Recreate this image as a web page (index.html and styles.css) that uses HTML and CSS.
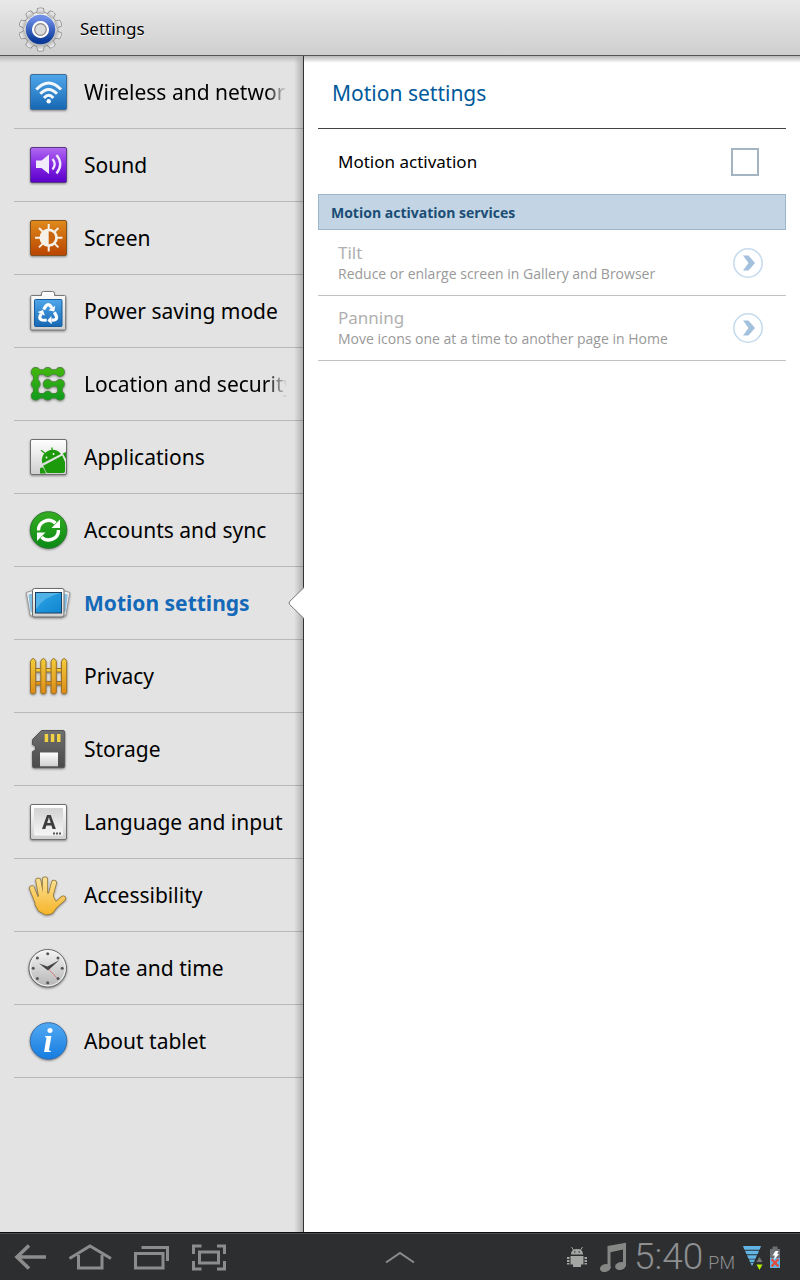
FILE: index.html
```html
<!DOCTYPE html>
<html lang="en">
<head>
<meta charset="utf-8">
<meta name="viewport" content="width=device-width, initial-scale=1">
<title>Settings</title>
<link rel="stylesheet" href="styles.css">
</head>
<body>
<svg class="defs" width="0" height="0" aria-hidden="true">
  <defs>
    <linearGradient id="blue" x2="0" y2="1"><stop stop-color="#4fa6ea"/><stop offset="1" stop-color="#1768b4"/></linearGradient>
    <linearGradient id="purple" x2="0" y2="1"><stop stop-color="#b06af0"/><stop offset=".5" stop-color="#8428e4"/><stop offset="1" stop-color="#5a00c8"/></linearGradient>
    <linearGradient id="orange" x2="0" y2="1"><stop stop-color="#e08a1c"/><stop offset="1" stop-color="#b94400"/></linearGradient>
    <linearGradient id="silver" x2="0" y2="1"><stop stop-color="#ffffff"/><stop offset="1" stop-color="#cfcfcf"/></linearGradient>
    <linearGradient id="pane" x2="0" y2="1"><stop stop-color="#d2d2d2"/><stop offset="1" stop-color="#f6f6f6"/></linearGradient>
    <linearGradient id="steel" x2="0" y2="1"><stop stop-color="#f4f4f4"/><stop offset="1" stop-color="#b4b4b4"/></linearGradient>
    <linearGradient id="green" x2="0" y2="1"><stop stop-color="#35ad22"/><stop offset="1" stop-color="#0a8a14"/></linearGradient>
    <linearGradient id="dots" gradientUnits="userSpaceOnUse" x1="0" y1="5" x2="0" y2="38"><stop stop-color="#46b80e"/><stop offset="1" stop-color="#109a1e"/></linearGradient>
    <linearGradient id="wood" x2="0" y2="1"><stop stop-color="#f3cf3c"/><stop offset="1" stop-color="#dd8a16"/></linearGradient>
    <linearGradient id="card" x2="0" y2="1"><stop stop-color="#6f6f6f"/><stop offset="1" stop-color="#4a4a4a"/></linearGradient>
    <linearGradient id="skin" gradientUnits="userSpaceOnUse" x1="0" y1="4" x2="0" y2="42"><stop stop-color="#fbe39a"/><stop offset="1" stop-color="#f5b428"/></linearGradient>
    <linearGradient id="info" x2="0" y2="1"><stop stop-color="#51a9f2"/><stop offset="1" stop-color="#167ce0"/></linearGradient>
    <linearGradient id="ring" x2="0" y2="1"><stop stop-color="#6d8de6"/><stop offset="1" stop-color="#0b3a98"/></linearGradient>
    <linearGradient id="photo" x2="1" y2="1"><stop stop-color="#2fa4e4"/><stop offset="1" stop-color="#0f86d2"/></linearGradient>
  </defs>
</svg>

<header class="topbar">
  <svg class="topbar-icon" viewBox="0 0 48 48" aria-hidden="true">
    <defs><path id="tooth" d="M20.800 9 L21.800 3.800 Q24.500 2.600 27.200 3.800 L28.200 9Z"/>
    <g id="gear"><circle cx="24.500" cy="24.500" r="17"/>
      <g id="teeth"><use href="#tooth"/><use href="#tooth" transform="rotate(36 24.500 24.500)"/><use href="#tooth" transform="rotate(72 24.500 24.500)"/><use href="#tooth" transform="rotate(108 24.500 24.500)"/><use href="#tooth" transform="rotate(144 24.500 24.500)"/></g>
      <use href="#teeth" transform="rotate(180 24.500 24.500)"/></g></defs>
    <use href="#gear" fill="#888" stroke="#888" stroke-width="1.500"/>
    <use href="#gear" fill="url(#steel)"/>
    <circle cx="24.500" cy="24.500" r="11.500" fill="none" stroke="url(#ring)" stroke-width="6.500"/>
    <circle cx="24.500" cy="24.500" r="7" fill="#dcdcdc" stroke="#fff" stroke-width="3"/>
    <circle cx="24.500" cy="24.500" r="5.800" fill="#dcdcdc" stroke="#888" stroke-width="1.200"/>
  </svg>
  <h1 class="topbar-title">Settings</h1>
</header>

<div class="content">
  <nav class="sidebar" aria-label="Settings categories">
    <ul class="menu">
      <li class="menu-row"><a class="menu-link" href="#wireless">
        <svg class="menu-icon" viewBox="0 0 44 44" aria-hidden="true"><rect x="4.500" y="4.500" width="36" height="35" rx="1.500" fill="url(#blue)" stroke="#3e6c98"/><g fill="none" stroke="#f2f7fb" stroke-width="3"><path d="M10.300 19.500Q22.700 6.500 35 19.500"/><path d="M14.300 23.800Q22.700 15 31 23.800"/><path d="M18 28Q22.700 22.500 27.300 28"/></g><circle cx="22.700" cy="31.200" r="2.200" fill="#fff"/></svg>
        <span class="menu-label menu-label-fade">Wireless and network</span></a></li>
      <li class="menu-row"><a class="menu-link" href="#sound">
        <svg class="menu-icon" viewBox="0 0 44 44" aria-hidden="true"><rect x="4.500" y="4.500" width="36" height="35" rx="1.500" fill="url(#purple)" stroke="#5a3a86"/><path d="M10 17.500h5.500L23 11.500v19.500l-7.500-6H10z" fill="#f1eafa"/><path d="M26.500 16q4.500 5.200 0 10.500M30.500 12q7.500 9 0 18.500" fill="none" stroke="#f1eafa" stroke-width="2.300"/></svg>
        <span class="menu-label">Sound</span></a></li>
      <li class="menu-row"><a class="menu-link" href="#screen">
        <svg class="menu-icon" viewBox="0 0 44 44" aria-hidden="true"><rect x="4.500" y="4.500" width="36" height="35" rx="1.500" fill="url(#orange)" stroke="#80521f"/><path d="M22.700 8v27.500M9 21.700h27.500M13 12l19.400 19.400M32.400 12L13 31.400" stroke="#f5f0e8" stroke-width="2"/><circle cx="22.700" cy="21.700" r="9.200" fill="#f5f0e8"/><path d="M22.700 15.200a6.500 6.500 0 0 1 0 13z" fill="#c9640c"/></svg>
        <span class="menu-label">Screen</span></a></li>
      <li class="menu-row"><a class="menu-link" href="#power">
        <svg class="menu-icon" viewBox="0 0 44 44" aria-hidden="true"><path d="M5.800 6.500h9.700V4.500q0-2 2-2h9q2 0 2 2v2h10q1.200 0 1.200 1.200v32q0 1.300-1.300 1.300H6q-1.300 0-1.300-1.300v-32q0-1.200 1.100-1.200z" fill="url(#silver)" stroke="#777"/><rect x="8.500" y="10.500" width="27.500" height="27" rx="1" fill="url(#blue)" stroke="#155d9f"/><g id="loop"><path d="M17.600 20.500L20 16.800Q22.200 14.500 24.400 16.800L25.800 19" fill="none" stroke="#fff" stroke-width="3.200"/><path d="M22.400 21.300L28.300 22.500 29.200 16.800z" fill="#fff"/></g><use href="#loop" transform="rotate(120 22.200 25)"/><use href="#loop" transform="rotate(240 22.200 25)"/></svg>
        <span class="menu-label">Power saving mode</span></a></li>
      <li class="menu-row"><a class="menu-link" href="#location">
        <svg class="menu-icon" viewBox="0 0 44 44" aria-hidden="true"><defs><path id="pat" d="M34 10H9.700V33.700H34V22H21.700"/><path id="pts" d="M9.700 10h0M21.700 10h0M34 10h0M9.700 22h0M21.700 22h0M34 22h0M9.700 33.700h0M21.700 33.700h0M34 33.700h0"/></defs><g fill="none" stroke-linecap="round"><g stroke="#4d8240"><use href="#pat" stroke-width="5.500"/><use href="#pts" stroke-width="9.800"/></g><g stroke="url(#dots)"><use href="#pat" stroke-width="4"/><use href="#pts" stroke-width="8.200"/></g></g></svg>
        <span class="menu-label menu-label-fade">Location and security</span></a></li>
      <li class="menu-row"><a class="menu-link" href="#applications">
        <svg class="menu-icon" viewBox="0 0 44 44" aria-hidden="true"><rect x="4.500" y="4.500" width="36" height="35" rx="1.500" fill="url(#silver)" stroke="#6f6f6f"/><g fill="#1c9a0c"><path d="M16.300 28.500q-2-8 5-12.200 8-4 13.700 2.700z"/><path d="M17.200 30.800L36.200 20.400 39 27v9q0 2-2 2H22q-1.500 0-2-1.200z"/><path d="M14 33.500q2.200-2.200 4 .4l2 4.600h-6z"/><path d="M36.800 18.500l3.200-1.500v7z"/><path d="M19.200 18.500l-4.200-3.200M26.500 16l-.8-3.500" stroke="#1c9a0c" stroke-width="1.200"/></g><g fill="#fff"><circle cx="20.500" cy="22.500" r=".9"/><circle cx="27.500" cy="19" r=".9"/></g></svg>
        <span class="menu-label">Applications</span></a></li>
      <li class="menu-row"><a class="menu-link" href="#accounts">
        <svg class="menu-icon" viewBox="0 0 44 44" aria-hidden="true"><circle cx="22.500" cy="22" r="18.300" fill="url(#green)" stroke="#2d7430"/><g id="sync-half"><path d="M12.500 22.500a10 10 0 0 1 17-7.200" fill="none" stroke="#fff" stroke-width="3.400"/><path d="M34 11.500v8.500h-8.500z" fill="#fff"/></g><use href="#sync-half" transform="rotate(180 22.500 22.200)"/></svg>
        <span class="menu-label">Accounts and sync</span></a></li>
      <li class="menu-row menu-row-current"><a class="menu-link" href="#motion" aria-current="page">
        <svg class="menu-icon" viewBox="0 0 44 44" aria-hidden="true"><g fill="#eee" stroke="#999"><path d="M.3 11.500l8-2.500v26.500l-4-1z"/><path d="M43.800 11.500l-8-2.500v26.500l4-1z"/></g><path d="M2.500 13.500l4-1v19l-2-1zM41.700 13.500l-4-1v19l2-1z" fill="#86bfdf"/><rect x="6.500" y="7.500" width="31.500" height="28.500" rx="2" fill="url(#silver)" stroke="#6c6c6c"/><rect x="9.500" y="11.500" width="26" height="20.500" fill="url(#photo)" stroke="#1d3f5e"/><path d="M10 12h25q-17 3.500-25 16z" fill="#50b2e6"/></svg>
        <span class="menu-label">Motion settings</span></a>
        <svg class="menu-pointer" viewBox="0 0 16 34" aria-hidden="true"><path d="M16 1.500L1.600 15.500q-1 1.500 0 3L16 32.500z" fill="#fff"/><path d="M16 1.500L1.600 15.500q-1 1.500 0 3L16 32.500" fill="none" stroke="#777"/></svg></li>
      <li class="menu-row"><a class="menu-link" href="#privacy">
        <svg class="menu-icon" viewBox="0 0 44 44" aria-hidden="true"><g stroke="#9a7026" fill="url(#wood)"><path d="M7 14.500h31v3.500H7zM7 27.500h31v3.500H7z"/><g id="pickets"><path id="picket" d="M4.500 7.500q0-1 2.600-3.300 2.600 2.300 2.600 3.300v31q0 1.300-2.600 1.300t-2.600-1.300z"/><use href="#picket" x="10.300"/><use href="#picket" x="20.600"/><use href="#picket" x="31"/></g></g></svg>
        <span class="menu-label">Privacy</span></a></li>
      <li class="menu-row"><a class="menu-link" href="#storage">
        <svg class="menu-icon" viewBox="0 0 44 44" aria-hidden="true"><path d="M15.500 3.500h21.500q1.700 0 1.700 1.700v34q0 1.500-1.700 1.500H8q-1.500 0-1.500-1.500V24.500l3-1.500v-4l-3-1.500v-5z" fill="url(#card)" stroke="#555"/><path d="M18.700 7h3.500v8h-3.500zM24.800 7h3.500v8h-3.500zM31 7h3.500v8H31z" fill="#f1d243"/><rect x="14" y="25.500" width="18" height="13.800" fill="url(#silver)"/></svg>
        <span class="menu-label">Storage</span></a></li>
      <li class="menu-row"><a class="menu-link" href="#language">
        <svg class="menu-icon" viewBox="0 0 44 44" aria-hidden="true"><rect x="4.500" y="4.500" width="36" height="35" rx="1.500" fill="url(#silver)" stroke="#6f6f6f"/><rect x="8" y="8" width="29" height="27.500" rx="1" fill="url(#pane)"/><text class="glyph-letter" x="23" y="29" text-anchor="middle">A</text><path d="M27 32.500h2v2h-2zM30 32.500h2v2h-2zM33 32.500h2v2h-2z" fill="#555"/></svg>
        <span class="menu-label">Language and input</span></a></li>
      <li class="menu-row"><a class="menu-link" href="#accessibility">
        <svg class="menu-icon" viewBox="0 0 44 44" aria-hidden="true"><defs><g id="hand" stroke-linecap="round" stroke-linejoin="round"><path d="M6 15.300L10.500 27M12.300 7.700L15.300 24M19 6.500V22M28 9.800L24.500 23"/><path d="M37.200 25.500L28 33.500" /><path d="M12 27L16 23.500 24 22.500 27.500 29 29.500 32 25 38.300 20 39.300 14.500 36.300 11.500 31z"/></g></defs><use href="#hand" fill="#8f7330" stroke="#8f7330" stroke-width="5.800"/><use href="#hand" fill="url(#skin)" stroke="url(#skin)" stroke-width="4.400"/></svg>
        <span class="menu-label">Accessibility</span></a></li>
      <li class="menu-row"><a class="menu-link" href="#date">
        <svg class="menu-icon" viewBox="0 0 44 44" aria-hidden="true"><circle cx="21.700" cy="22.300" r="18.800" fill="url(#steel)" stroke="#666"/><circle cx="21.700" cy="22.300" r="17.500" fill="none" stroke="#f5f5f5"/><g id="marks" fill="#555"><circle cx="21.700" cy="7.800" r="1.500"/><circle cx="32" cy="12" r="1.500"/><circle cx="36.200" cy="22.300" r="1.500"/><circle cx="32" cy="32.600" r="1.500"/></g><use href="#marks" transform="rotate(180 21.700 22.300)"/><path d="M21 21.500l9.500 10" stroke="#d57a7a"/><path d="M13 17.500l8.500 3L33.500 14 22 24.500z" fill="#444"/></svg>
        <span class="menu-label">Date and time</span></a></li>
      <li class="menu-row"><a class="menu-link" href="#about">
        <svg class="menu-icon" viewBox="0 0 44 44" aria-hidden="true"><circle cx="22.500" cy="22" r="18.300" fill="url(#info)" stroke="#3b6ea8"/><text class="glyph-info" x="22" y="33" text-anchor="middle">i</text></svg>
        <span class="menu-label">About tablet</span></a></li>
    </ul>
  </nav>

  <main class="panel">
    <h2 class="panel-title">Motion settings</h2>
    <div class="option">
      <label class="option-name" for="motion-activation">Motion activation</label>
      <input class="option-check" type="checkbox" id="motion-activation">
    </div>
    <h3 class="section">Motion activation services</h3>
    <button class="service" type="button" disabled>
      <span class="service-text"><span class="service-name">Tilt</span><span class="service-note">Reduce or enlarge screen in Gallery and Browser</span></span>
      <svg class="service-arrow" viewBox="0 0 30 30" aria-hidden="true"><circle cx="15" cy="15" r="14.200" fill="#fff" stroke="#c6dbed" stroke-width="1.600"/><path d="M10 7.500h5.500l6.500 7.500-6.500 7.500H10l5.500-7.500z" fill="#a3c1dc"/></svg>
    </button>
    <button class="service" type="button" disabled>
      <span class="service-text"><span class="service-name">Panning</span><span class="service-note">Move icons one at a time to another page in Home</span></span>
      <svg class="service-arrow" viewBox="0 0 30 30" aria-hidden="true"><circle cx="15" cy="15" r="14.200" fill="#fff" stroke="#c6dbed" stroke-width="1.600"/><path d="M10 7.500h5.500l6.500 7.500-6.500 7.500H10l5.500-7.500z" fill="#a3c1dc"/></svg>
    </button>
  </main>
</div>

<footer class="sysbar">
  <div class="sysbar-nav">
    <button class="nav-button" type="button" aria-label="Back"><svg class="nav-icon" viewBox="0 0 44 30"><path d="M21 3.500L9 15l12 11.500M10 15h28" stroke-width="3.600"/></svg></button>
    <button class="nav-button" type="button" aria-label="Home"><svg class="nav-icon" viewBox="0 0 44 30"><path d="M1.500 16.500L22 4l21 12.500" stroke-width="3"/><path d="M10.500 13v13h23.500V13" stroke-width="3"/></svg></button>
    <button class="nav-button" type="button" aria-label="Recent apps"><svg class="nav-icon" viewBox="0 0 44 30"><path d="M7.500 11.500h27.500v14.500H7.500zM13.500 5.500h26V19" stroke-width="3"/></svg></button>
    <button class="nav-button" type="button" aria-label="Screenshot"><svg class="nav-icon" viewBox="0 0 44 30"><path d="M11.500 10h19v11h-19zM5.500 12V4h8M29 4h7.500v8M5.500 19v8h8M29 27h7.500v-8" stroke-width="3"/></svg></button>
  </div>
  <button class="tray-button" type="button" aria-label="Open tray"><svg class="tray-icon" viewBox="0 0 30 14"><path d="M1 12.500L15 3l14 9.500" fill="none" stroke="#8c8c8c" stroke-width="2"/></svg></button>
  <div class="sysbar-status">
    <svg class="status-android" viewBox="0 0 22 22" aria-hidden="true"><g fill="#a4a6a4"><path d="M5 8.500q0-5.500 6-5.500t6 5.500z"/><path d="M4.500 10h13v8.500H15V21H7v-2.500H4.500z"/><path d="M1 11h2.500v2H1zM1 14h2.500v2H1zM1 17h2.500v1.500H1zM18.500 11H21v2h-2.500zM18.500 14H21v2h-2.500zM18.500 17H21v1.500h-2.500z"/><path d="M5.500 1l2 3M16.500 1l-2 3" stroke="#a4a6a4"/></g><path d="M8 6h1.500M12.500 6H14" stroke="#2d2e30"/></svg>
    <svg class="status-music" viewBox="0 0 28 30" aria-hidden="true"><g fill="#858785"><path d="M8.500 4L27 .8V24h-3V7.500L11.500 10.200V26h-3z"/><ellipse cx="6.300" cy="26" rx="5.400" ry="3.900" transform="rotate(-15 6.300 26)"/><ellipse cx="21.500" cy="24" rx="5.400" ry="3.900" transform="rotate(-15 21.500 24)"/></g></svg>
    <time class="clock" datetime="17:40"><span class="clock-time">5:40</span><span class="clock-half">PM</span></time>
    <svg class="status-signal" viewBox="0 0 20 26" aria-hidden="true"><path d="M0 2h18l-1.300 3.800H1.300zM2 6.800h14l-1.300 3.500H3.500zM4 11.300h10L12.500 14.800h-7zM6 15.600h6l-1 2.600H7zM7.500 19h3L9 22z" fill="#62b6e6"/><path d="M16.500 13l3 5h-6z" fill="#777"/><path d="M13.500 20.500h6l-3 5.500z" fill="#b6f000"/></svg>
    <svg class="status-battery" viewBox="0 0 12 24" aria-hidden="true"><path d="M1 4h2.500V1.500h5V4H11v9H1z" fill="#6c6f73"/><path d="M1 13h10v10H1z" fill="#62b6e6"/><path d="M6.500 6h3l-1.300 3H10l-5 6 .8-4.500H3.500z" fill="#fff"/><path d="M2.500 14l7 7.500M9.500 14l-7 7.500" stroke="#e34b3c" stroke-width="2.200"/></svg>
  </div>
</footer>
</body>
</html>
```
FILE: styles.css
```css
* { box-sizing: border-box; }

body {
  margin: 0;
  min-height: 100vh;
  display: flex;
  flex-direction: column;
  background: #fff;
  color: #000;
  font-family: "Noto Sans", "Open Sans", sans-serif;
}

.defs { position: absolute; }

.topbar {
  display: flex;
  align-items: center;
  gap: 16px;
  height: 56px;
  padding: 2px 16px 0;
  background: linear-gradient(#e8e8e8, #cfcfcf);
  border-bottom: 1px solid #555;
}
.topbar-icon { width: 48px; height: 48px; }
.topbar-title {
  margin: 0;
  font-size: 17px;
  font-weight: 400;
  text-shadow: 0 1px 0 #fff;
}

.content {
  flex: 1;
  display: grid;
  grid-template-columns: 38% 1fr;
}

.sidebar {
  padding-left: 14px;
  background:
    linear-gradient(to left, #b0b0b0, #e3e3e300 9px),
    linear-gradient(#b8b8b8, #e3e3e300 7px),
    #e3e3e3;
  border-right: 1px solid #333;
}
.menu {
  margin: 0;
  padding: 0;
  list-style: none;
}
.menu-row {
  position: relative;
  height: 73px;
  border-bottom: 1px solid #00000030;
}
.menu-link {
  display: flex;
  align-items: center;
  gap: 14px;
  height: 100%;
  padding: 0 16px 0 12px;
  color: #000;
  font-size: 21px;
  text-decoration: none;
}
.menu-icon {
  flex: none;
  width: 44px;
  height: 44px;
  overflow: visible;
  filter: drop-shadow(0 1px 1px rgba(0, 0, 0, 0.4));
}
.menu-label {
  flex: 1;
  overflow: hidden;
  white-space: nowrap;
}
.menu-label-fade {
  mask-image: linear-gradient(to left, transparent, #000 20px);
}
.menu-row-current .menu-link {
  color: #1469b8;
  font-weight: 700;
}
.menu-pointer {
  position: absolute;
  top: 19px;
  right: -1px;
  width: 16px;
  height: 34px;
}
.glyph-letter {
  font: 700 20px "Noto Sans", sans-serif;
  fill: #3c3c3c;
}
.glyph-info {
  font: italic 700 34px "Liberation Serif", serif;
  fill: #fff;
}

.panel {
  padding: 0 14px;
  background: linear-gradient(#b8b8b8, #fff 7px);
}
.panel-title {
  display: flex;
  align-items: center;
  height: 73px;
  margin: 0;
  padding: 2px 14px 0;
  border-bottom: 1px solid #444;
  color: #005a9c;
  font-size: 21px;
  font-weight: 400;
}
.option {
  display: flex;
  align-items: center;
  justify-content: space-between;
  height: 65px;
  padding: 0 27px 0 20px;
}
.option-name { font-size: 17px; }
.option-check {
  appearance: none;
  width: 28px;
  height: 28px;
  margin: 0;
  border: 2px solid #a5b4c1;
  background: #fff;
}
.option-check:checked { background: #4b8fc7; }
.section {
  display: flex;
  align-items: center;
  height: 36px;
  margin: 0 0 1px;
  padding: 0 12px;
  border: 1px solid #9bb6cf;
  background: #c3d5e4;
  color: #1b4d75;
  font-family: "Open Sans", sans-serif;
  font-size: 14px;
  font-weight: 700;
}
.service {
  display: flex;
  align-items: center;
  justify-content: space-between;
  width: 100%;
  height: 65px;
  padding: 0 23px 0 20px;
  border: 0;
  border-bottom: 1px solid #c2c2c2;
  background: none;
  font-family: inherit;
  text-align: left;
}
.service-text { display: grid; }
.service-name {
  color: #b0b0b0;
  font-size: 17px;
  line-height: 22px;
}
.service-note {
  color: #999;
  font-family: "Open Sans", sans-serif;
  font-size: 14px;
  line-height: 20px;
}
.service-arrow {
  flex: none;
  width: 30px;
  height: 30px;
}

.sysbar {
  display: grid;
  grid-template-columns: 1fr auto 1fr;
  align-items: center;
  height: 48px;
  border-top: 1px solid #0c0d0f;
  background: #2d2e30;
  box-shadow: inset 0 1px 0 #4b4c4e;
}
.sysbar-nav { display: flex; }
.nav-button,
.tray-button {
  display: grid;
  place-items: center;
  height: 46px;
  padding: 0;
  border: 0;
  background: none;
}
.nav-button { width: 60px; }
.tray-button { width: 60px; }
.nav-icon {
  width: 44px;
  height: 30px;
  fill: none;
  stroke: #8c8c8c;
}
.tray-icon { width: 30px; height: 14px; }
.sysbar-status {
  display: flex;
  align-items: center;
  justify-content: flex-end;
  padding-right: 19px;
}
.status-android { width: 22px; height: 22px; }
.status-music { width: 28px; height: 30px; margin: 0 7px 0 11px; }
.clock {
  display: flex;
  align-items: baseline;
  gap: 5px;
  margin-right: 8px;
  color: #8d8f91;
  font-family: Roboto, "Liberation Sans", sans-serif;
  font-weight: 300;
  white-space: nowrap;
}
.clock-time { font-size: 37px; line-height: 46px; }
.clock-half { font-size: 18px; line-height: 20px; }
.status-signal { width: 20px; height: 26px; }
.status-battery { width: 12px; height: 24px; margin-left: 6px; }
```
